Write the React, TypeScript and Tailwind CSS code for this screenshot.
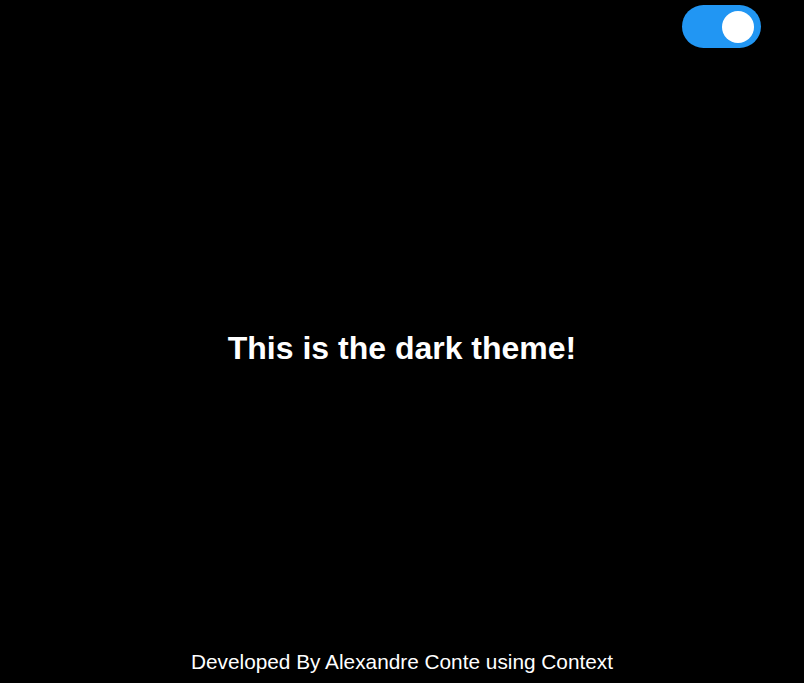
import React, { useState } from "react";

export default function App() {
  const [dark, setDark] = useState(true);

  return (
    <div
      className={`min-h-screen flex flex-col ${dark ? "bg-black text-white" : "bg-white text-black"}`}
      style={{ fontFamily: '"Liberation Sans", Arial, sans-serif' }}
    >
      <header className="flex justify-end pt-[5px] pr-[43px]">
        <button
          type="button"
          onClick={() => setDark(!dark)}
          className={`w-[79px] h-[43px] rounded-full flex items-center px-[7px] ${dark ? "bg-[#2196f3] justify-end" : "bg-[#cccccc] justify-start"}`}
        >
          <span className="block w-[32px] h-[32px] rounded-full bg-white" />
        </button>
      </header>
      <main className="flex-1 flex items-center justify-center pt-[3px]">
        <h1 className="text-[32px] font-bold">
          This is the {dark ? "dark" : "light"} theme!
        </h1>
      </main>
      <footer className="text-center text-[20.8px] pb-[6px]">
        Developed By Alexandre Conte using Context
      </footer>
    </div>
  );
}
